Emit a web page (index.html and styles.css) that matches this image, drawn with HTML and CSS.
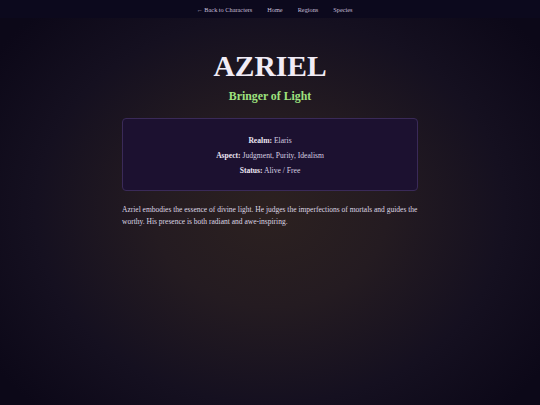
FILE: index.html
```html
<!DOCTYPE html>
<html lang="en">
<head>
<meta charset="utf-8">
<title>Azriel</title>
<link rel="stylesheet" href="styles.css">
</head>
<body>
<nav class="topnav">
  <a href="#">← Back to Characters</a>
  <a href="#">Home</a>
  <a href="#">Regions</a>
  <a href="#">Species</a>
</nav>
<main class="page">
  <h1 class="name">AZRIEL</h1>
  <h2 class="epithet">Bringer of Light</h2>
  <section class="card">
    <p><strong>Realm:</strong> Elaris</p>
    <p><strong>Aspect:</strong> Judgment, Purity, Idealism</p>
    <p><strong>Status:</strong> Alive / Free</p>
  </section>
  <p class="bio">Azriel embodies the essence of divine light. He judges the imperfections of mortals and guides the worthy. His presence is both radiant and awe-inspiring.</p>
</main>
</body>
</html>
```
FILE: styles.css
```css
html, body {
  margin: 0;
  padding: 0;
  height: 100%;
}
body {
  font-family: "Liberation Serif", "DejaVu Serif", serif;
  color: #ddd5e6;
  background: radial-gradient(ellipse 62% 68% at 50% 52%, #2c2120 0%, #241b21 35%, #151020 70%, #0c0818 100%);
  background-color: #0c0818;
}
.topnav {
  height: 18px;
  box-sizing: border-box;
  padding-left: 9px;
  display: flex;
  justify-content: center;
  align-items: center;
  gap: 15px;
  background: #0c091d;
}
.topnav a {
  color: #c6bfd9;
  text-decoration: none;
  font-size: 6.3px;
}
.page {
  width: 296px;
  margin: 0 auto;
  padding-top: 31px;
}
.name {
  margin: 0;
  text-align: center;
  font-size: 29.5px;
  line-height: 34px;
  color: #f1ecf6;
  font-weight: bold;
}
.epithet {
  margin: 6px 0 0;
  text-align: center;
  font-size: 11.8px;
  line-height: 14px;
  color: #9ee27f;
  font-weight: bold;
}
.card {
  margin-top: 15px;
  height: 73px;
  box-sizing: border-box;
  border: 1px solid #3a2a58;
  border-radius: 4px;
  background: #1c1130;
  display: flex;
  flex-direction: column;
  justify-content: center;
  align-items: center;
  gap: 5px;
  padding-top: 2px;
}
.card p {
  margin: 0;
  font-size: 7.6px;
  line-height: 10px;
  color: #d6cfe0;
}
.card strong {
  color: #ece6f4;
}
.bio {
  margin: 13px 0 0;
  font-size: 7.5px;
  line-height: 12px;
  color: #ddd6e4;
}
```
